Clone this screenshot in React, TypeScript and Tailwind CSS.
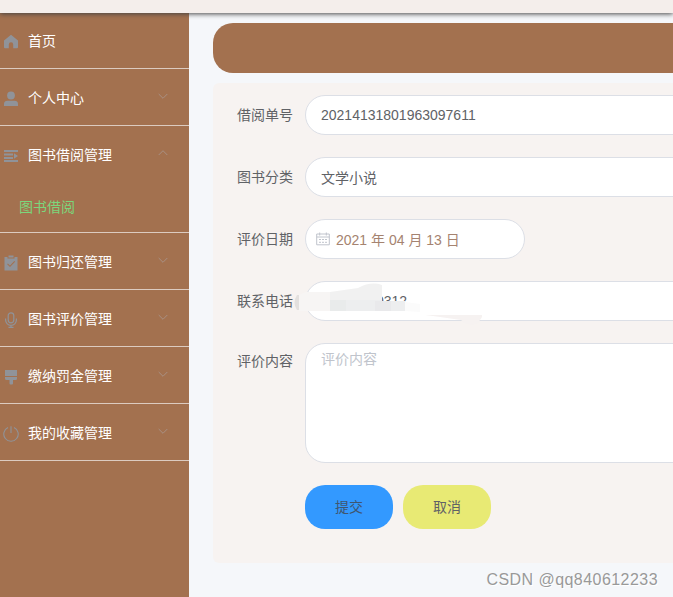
import type { ReactNode } from 'react'

type MenuItem = {
  label: string
  icon: ReactNode
  children?: string[]
  arrow?: boolean
}

const menu: MenuItem[] = [
  {
    label: '首页',
    icon: <path d="M8 .8 15 6.500v6.700a1 1 0 0 1-1 1h-3.800V10.500a2.200 2.200 0 0 0-4.400 0v3.700H2a1 1 0 0 1-1-1V6.500z" fill="currentColor" />,
  },
  {
    label: '个人中心',
    arrow: true,
    icon: (
      <g fill="currentColor">
        <circle cx="8" cy="4.500" r="3.900" />
        <path d="M1 15v-2.200C1 10.900 2.500 9.800 4.300 9.800h7.400c1.800 0 3.300 1.100 3.300 3V15z" />
      </g>
    ),
  },
  {
    label: '图书借阅管理',
    arrow: true,
    children: ['图书借阅'],
    icon: (
      <g fill="currentColor">
        <path d="M1 2h14v2H1zM1 5.500h9v2H1zM1 9h9v2H1zM1 12h14v2H1zM11 5.200l4 2.800-4 2.800z" />
      </g>
    ),
  },
  {
    label: '图书归还管理',
    arrow: true,
    icon: (
      <g>
        <path d="M1.500 2h3v1.500h7V2h3v13.500h-13zM5.500.5h5v2h-5z" fill="currentColor" />
        <path d="m4.500 8.800 2.500 2.500 4.700-5" fill="none" stroke="#a3714f" strokeWidth="1.100" />
      </g>
    ),
  },
  {
    label: '图书评价管理',
    arrow: true,
    icon: (
      <g fill="none" stroke="currentColor" strokeWidth="1.200">
        <rect x="5.200" y=".8" width="5.600" height="10" rx="2.800" />
        <path d="M2.600 6.500V8a5.400 5.400 0 0 0 10.800 0V6.500M8 13.400v2M5.500 15.400h5" />
      </g>
    ),
  },
  {
    label: '缴纳罚金管理',
    arrow: true,
    icon: <path d="M2 1h12v6H2zM2 8h12v1.500a1.500 1.500 0 0 1-1.500 1.500H10v3.500a1 1 0 0 1-1 1H7.500a1 1 0 0 1-1-1V11h-3A1.500 1.500 0 0 1 2 9.500z" fill="currentColor" />,
  },
  {
    label: '我的收藏管理',
    arrow: true,
    icon: <path d="M5 1.500a7.200 7.200 0 1 0 6 0M8 .2v6.800" fill="none" stroke="currentColor" strokeWidth="1.100" />,
  },
]

function Sidebar() {
  return (
    <aside className="w-[189px] shrink-0 bg-[#a3714f]">
      <div className="-mt-px">
        {menu.map((item) => (
          <div key={item.label} className="border-b border-[#dccbc0]">
            <div className="flex h-14 items-center pt-0.5 pr-5 pl-[3px] text-white">
              <svg viewBox="0 0 16 16" className="mt-px mr-[9px] size-4 shrink-0 text-[#909399]">{item.icon}</svg>
              <span>{item.label}</span>
              {item.arrow && (
                <svg viewBox="0 0 12 12" className="mb-1 ml-auto size-3 text-[#a99083]" fill="none" stroke="currentColor">
                  <path d={item.children ? 'm1.700 8 4.300-4.300L10.300 8' : 'm1.700 4 4.300 4.300L10.300 4'} />
                </svg>
              )}
            </div>
            {item.children?.map((child) => (
              <div key={child} className="flex h-[50px] items-center pl-[19px] text-[#7cd67c]">{child}</div>
            ))}
          </div>
        ))}
      </div>
    </aside>
  )
}

function Row({ label, children, labelClass = 'leading-10' }: { label: string; children: ReactNode; labelClass?: string }) {
  return (
    <div className="mb-[22px] flex">
      <label className={`w-20 shrink-0 pr-3 text-right ${labelClass}`}>{label}</label>
      {children}
    </div>
  )
}

const field = 'flex h-10 items-center rounded-[20px] border border-[#dcdfe6] bg-white'

export default function App() {
  return (
    <div className="relative flex h-[597px] w-full flex-col overflow-hidden bg-[#f5f7fa] font-['Liberation_Sans','Noto_Sans_CJK_SC',sans-serif] text-sm text-[#606266]">
      <header className="z-10 h-[13px] shrink-0 bg-[#f4eeeb] shadow-[0_1px_5px_#444]" />
      <div className="flex flex-1">
        <Sidebar />
        <main className="min-w-0 flex-1 pt-2.5 pl-6">
          <div className="h-[50px] w-[700px] rounded-[20px] bg-[#a3714f]" />
          <form className="mt-2.5 h-[480px] w-[700px] rounded-md bg-[#f7f3f1] pt-3 pl-3">
            <Row label="借阅单号">
              <div className={`${field} flex-1 px-[15px]`}>20214131801963097611</div>
            </Row>
            <Row label="图书分类">
              <div className={`${field} flex-1 px-[15px] pt-0.5`}>文学小说</div>
            </Row>
            <Row label="评价日期">
              <div className={`${field} w-[220px] pl-2.5 text-[#a58370]`}>
                <svg viewBox="0 0 14 14" className="mr-[6px] size-3.5 text-[#c0c4cc]" fill="none" stroke="currentColor">
                  <path d="M.7 2h12.600v10.800H.7zM.7 5h12.600M3.700.5v3M10.300.5v3" />
                  <path d="M3 7.500h2m1 0h2m1 0h2M3 10.300h2m1 0h2m1 0h2" />
                </svg>
                <span className="pt-0.5">2021 年 04 月 13 日</span>
              </div>
            </Row>
            <Row label="联系电话">
              <div className={`${field} relative flex-1 pl-[70px]`}>
                0312
                {/* smudge hiding the phone number */}
                <svg className="absolute -top-px -left-3 h-12 w-[200px]" viewBox="0 0 200 48">
                  <path d="M5 14h-2q-5 8 0 15h2z" fill="#e3e0de" />
                  <path d="M5 14 12 11h24v19H5z" fill="#f7f5f4" />
                  <path d="M36 11 64 7Q77 0 88 4v15H36z" fill="#f1f1f1" />
                  <path d="M36 19h52v1h23v10H36z" fill="#edeeef" />
                  <path d="M36 19h16v11H36z" fill="#e9ebeb" />
                  <path d="M81 20h16v10H81z" fill="#e9e9eb" />
                  <path d="M111 21l15 2v8l-15-1z" fill="#fbfbfb" />
                  <path d="M131 34h57v2l-4 6q-9 5-17-3l-28-4z" fill="#f6f2f1" />
                </svg>
              </div>
            </Row>
            <Row label="评价内容" labelClass="leading-9">
              <div className="h-[120px] flex-1 rounded-[20px] border border-[#dcdfe6] bg-white px-[15px] py-[5px] leading-[21px] text-[#c0c4cc]">评价内容</div>
            </Row>
            <div className="flex gap-2.5 pl-20">
              <button type="button" className="h-11 w-[88px] rounded-[20px] bg-[#3399ff] text-[#40566f]">提交</button>
              <button type="button" className="h-11 w-[88px] rounded-[20px] bg-[#e8ea74]">取消</button>
            </div>
          </form>
        </main>
      </div>
      <div className="absolute right-[15px] bottom-[7px] text-base leading-5 tracking-[0.45px] text-[#999] [text-shadow:1px_1px_0_#fff]">CSDN @qq840612233</div>
    </div>
  )
}
